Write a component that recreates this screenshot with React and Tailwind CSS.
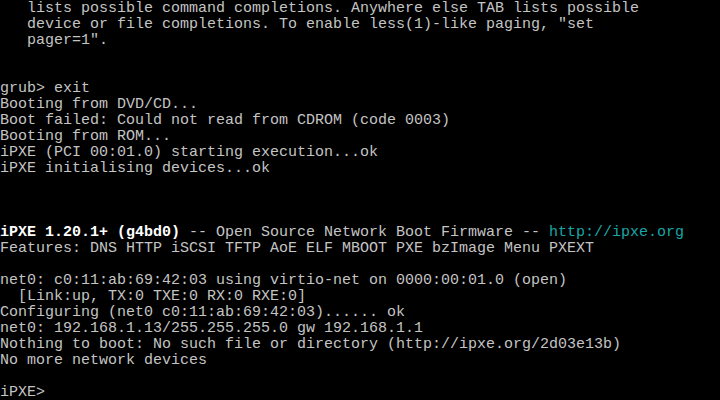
import React from 'react'

// 80x25 text console, 9x16 cells
const rows = [
  '   lists possible command completions. Anywhere else TAB lists possible',
  '   device or file completions. To enable less(1)-like paging, "set',
  '   pager=1".',
  '',
  '',
  'grub> exit',
  'Booting from DVD/CD...',
  'Boot failed: Could not read from CDROM (code 0003)',
  'Booting from ROM...',
  'iPXE (PCI 00:01.0) starting execution...ok',
  'iPXE initialising devices...ok',
  '',
  '',
  '',
  'BANNER',
  'Features: DNS HTTP iSCSI TFTP AoE ELF MBOOT PXE bzImage Menu PXEXT',
  '',
  'net0: c0:11:ab:69:42:03 using virtio-net on 0000:00:01.0 (open)',
  '  [Link:up, TX:0 TXE:0 RX:0 RXE:0]',
  'Configuring (net0 c0:11:ab:69:42:03)...... ok',
  'net0: 192.168.1.13/255.255.255.0 gw 192.168.1.1',
  'Nothing to boot: No such file or directory (http://ipxe.org/2d03e13b)',
  'No more network devices',
  '',
  'iPXE>',
]

function Row({ text }) {
  if (text === 'BANNER') {
    return (
      <div className="h-[16px] whitespace-pre">
        <span className="text-white font-bold">iPXE 1.20.1+ (g4bd0)</span>
        <span> -- Open Source Network Boot Firmware -- </span>
        <span className="text-[#1aa6a6]">http://ipxe.org</span>
      </div>
    )
  }
  return <div className="h-[16px] whitespace-pre">{text}</div>
}

export default function App() {
  return (
    <div className="w-[720px] h-[400px] bg-black overflow-hidden pt-[1px] text-[#c4c4c4] font-['Liberation_Mono',monospace] text-[15px] leading-[16px]">
      {rows.map((r, i) => (
        <Row key={i} text={r} />
      ))}
    </div>
  )
}
